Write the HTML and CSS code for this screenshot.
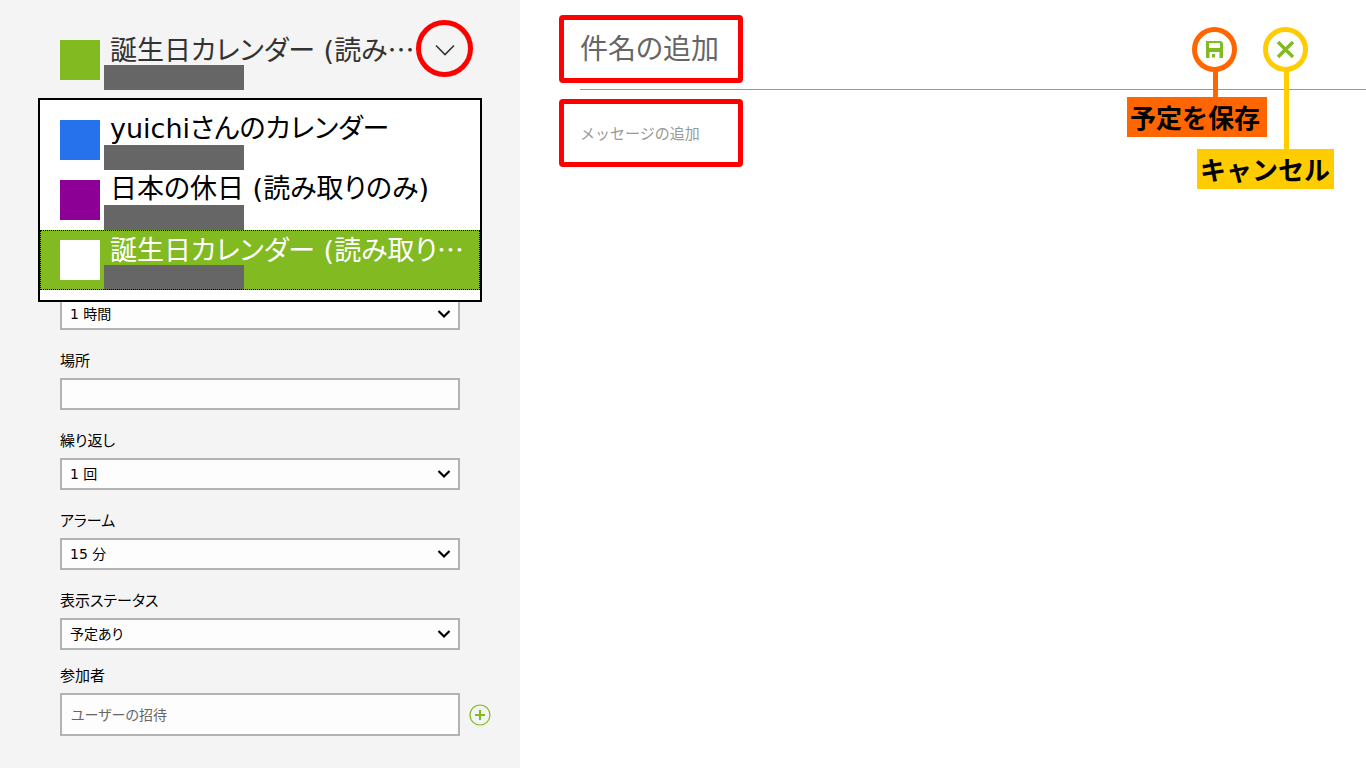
FILE: index.html
```html
<!DOCTYPE html>
<html lang="ja">
<head>
<meta charset="utf-8">
<title>予定の追加</title>
<link rel="stylesheet" href="styles.css">
</head>
<body>
<div class="app">
  <aside class="sidebar">
    <div class="picker">
      <div class="calendar">
        <span class="swatch swatch-green"></span>
        <span class="calendar-text">
          <span class="calendar-name">誕生日カレンダー (読み<span class="dots">…</span></span>
          <span class="redacted"></span>
        </span>
      </div>
      <button class="picker-toggle" type="button" aria-label="カレンダーの選択" aria-expanded="true">
        <svg width="20" height="12" viewBox="0 0 20 12"><path d="M1 1.5 10 10.5 19 1.5" fill="none" stroke="#333" stroke-width="1.6"/></svg>
      </button>
      <div class="menu" role="listbox" aria-label="カレンダー">
        <button class="calendar option" type="button" role="option" aria-selected="false">
          <span class="swatch swatch-blue"></span>
          <span class="calendar-text"><span class="calendar-name">yuichiさんのカレンダー</span><span class="redacted"></span></span>
        </button>
        <button class="calendar option" type="button" role="option" aria-selected="false">
          <span class="swatch swatch-purple"></span>
          <span class="calendar-text"><span class="calendar-name">日本の休日 (読み取りのみ)</span><span class="redacted"></span></span>
        </button>
        <button class="calendar option option-selected" type="button" role="option" aria-selected="true">
          <span class="swatch swatch-white"></span>
          <span class="calendar-text"><span class="calendar-name">誕生日カレンダー (読み取り<span class="dots">…</span></span><span class="redacted"></span></span>
        </button>
      </div>
    </div>

    <form class="fields">
      <div class="field">
        <div class="select">
          <select class="control" aria-label="期間"><option>1 時間</option></select>
          <svg class="arrow" width="14" height="10" viewBox="0 0 14 10"><path d="M1.5 2 7 7.5 12.500 2" fill="none" stroke="#000" stroke-width="2.2"/></svg>
        </div>
      </div>
      <div class="field">
        <label class="label" for="place">場所</label>
        <input class="control" id="place" type="text">
      </div>
      <div class="field">
        <label class="label" for="repeat">繰り返し</label>
        <div class="select">
          <select class="control" id="repeat"><option>1 回</option></select>
          <svg class="arrow" width="14" height="10" viewBox="0 0 14 10"><path d="M1.500 2 7 7.500 12.500 2" fill="none" stroke="#000" stroke-width="2.2"/></svg>
        </div>
      </div>
      <div class="field">
        <label class="label" for="alarm">アラーム</label>
        <div class="select">
          <select class="control" id="alarm"><option>15 分</option></select>
          <svg class="arrow" width="14" height="10" viewBox="0 0 14 10"><path d="M1.500 2 7 7.500 12.500 2" fill="none" stroke="#000" stroke-width="2.2"/></svg>
        </div>
      </div>
      <div class="field">
        <label class="label" for="status">表示ステータス</label>
        <div class="select">
          <select class="control" id="status"><option>予定あり</option></select>
          <svg class="arrow" width="14" height="10" viewBox="0 0 14 10"><path d="M1.500 2 7 7.500 12.500 2" fill="none" stroke="#000" stroke-width="2.2"/></svg>
        </div>
      </div>
      <div class="field field-people">
        <label class="label" for="people">参加者</label>
        <div class="people">
          <input class="control control-tall" id="people" type="text" placeholder="ユーザーの招待">
          <button class="add" type="button" aria-label="追加">
            <svg width="22" height="22" viewBox="0 0 22 22"><circle cx="11" cy="11" r="10" fill="none" stroke="#82ba21" stroke-width="1.200"/><path d="M11 6v10M6 11h10" stroke="#82ba21" stroke-width="2"/></svg>
          </button>
        </div>
      </div>
    </form>
  </aside>

  <main class="main">
    <header class="header">
      <div class="marked">
        <input class="subject" type="text" placeholder="件名の追加" aria-label="件名">
      </div>
      <div class="actions">
        <div class="action action-save">
          <button class="round" type="button" aria-label="保存">
            <svg width="17" height="17" viewBox="0 0 17 17"><path fill="#82ba21" fill-rule="evenodd" d="M0 0H15L17 2V17H13.500V11H3.500V17H0ZM3 2V7H14V2ZM6 13H9V16.500H6Z"/></svg>
          </button>
          <span class="stem"></span>
          <span class="callout">予定を保存</span>
        </div>
        <div class="action action-cancel">
          <button class="round" type="button" aria-label="閉じる">
            <svg width="19" height="19" viewBox="0 0 19 19"><path d="M2 2 17 17M17 2 2 17" stroke="#82ba21" stroke-width="3.400"/></svg>
          </button>
          <span class="stem"></span>
          <span class="callout">キャンセル</span>
        </div>
      </div>
    </header>
    <div class="marked">
      <textarea class="message" placeholder="メッセージの追加" aria-label="メッセージ"></textarea>
    </div>
  </main>
</div>
</body>
</html>
```
FILE: styles.css
```css
* { box-sizing: border-box; }

body {
  margin: 0;
  background: #fff;
  color: #000;
  font-family: "DejaVu Sans", "Noto Sans CJK JP", sans-serif;
  font-size: 15px;
  font-feature-settings: "palt";
}

button, input, select, textarea {
  font: inherit;
  font-feature-settings: inherit;
  color: inherit;
  border: 0;
  margin: 0;
  padding: 0;
  background: none;
  border-radius: 0;
}

svg { display: block; }

.app { display: flex; min-height: 100vh; }

.sidebar {
  flex: 0 0 520px;
  padding: 30px 60px 32px;
  background: #f4f4f4;
}

.picker { position: relative; }

.calendar { display: flex; gap: 4px; height: 60px; }

.calendar-text { display: flex; flex-direction: column; }

.calendar-name {
  height: 35px;
  padding-left: 6px;
  font-size: 27px;
  line-height: 38px;
  white-space: nowrap;
  text-align: left;
}

.picker > .calendar { color: #333; }

.dots { font-family: "Noto Sans CJK JP", sans-serif; }

.redacted { width: 140px; height: 25px; background: #666; }

.swatch { width: 40px; height: 40px; margin-top: 10px; }
.swatch-green { background: #82ba21; }
.swatch-blue { background: #2672ec; }
.swatch-purple { background: #8c0095; }
.swatch-white { background: #fff; }

.picker-toggle {
  position: absolute;
  top: -10px;
  right: -13px;
  display: grid;
  place-items: center;
  width: 57px;
  height: 57px;
  padding-top: 3px;
  border: 5px solid #f00;
  border-radius: 50%;
}

.menu {
  position: absolute;
  z-index: 2;
  top: 68px;
  left: -22px;
  right: -22px;
  padding: 10px 0;
  border: 2px solid #000;
  background: #fff;
}

.option { width: 100%; padding-left: 20px; }

.option-selected {
  background: #82ba21;
  color: #fff;
  outline: 1px dotted #000;
  outline-offset: -1px;
}

.fields {
  display: flex;
  flex-direction: column;
  gap: 20px;
  padding-top: 208px;
}

.field { display: flex; flex-direction: column; gap: 6px; }

.field-people { margin-top: -5px; }

.label { font-size: 15px; line-height: 22px; }

.control {
  width: 100%;
  height: 32px;
  padding: 0 8px;
  border: 2px solid #b3b3b3;
  background: #fdfdfd;
  font-size: 14px;
}

.control-tall { height: 43px; padding: 0 9px; }

.select { display: grid; align-items: center; }
.select > * { grid-area: 1 / 1; }
.select select { appearance: none; }

.arrow { justify-self: end; margin-right: 9px; pointer-events: none; }

.people { display: flex; align-items: center; gap: 9px; margin-right: -31px; }

.add { flex: none; }

::placeholder { color: #666; opacity: 1; }

.main { flex: 1; min-width: 0; padding-left: 39px; }

.header {
  display: flex;
  justify-content: space-between;
  height: 99px;
  padding-top: 15px;
  background: linear-gradient(#82ba21, #82ba21) 21px 89px / 100% 1px no-repeat;
}

.marked {
  width: 184px;
  height: 68px;
  border: 5px solid #f00;
  border-radius: 4px;
}

.subject, .message { width: 100%; height: 100%; padding-left: 16px; }

.subject { font-size: 28px; }

.message {
  display: block;
  padding-top: 18px;
  line-height: 24px;
  font-size: 15px;
  font-feature-settings: normal;
  resize: none;
}

.message::placeholder { color: #999; }

.actions { display: flex; gap: 26px; padding: 12px 58px 0 0; }

.action { position: relative; width: 45px; height: 45px; }
.action-save { --mark: #f60; --reach: 70px; }
.action-cancel { --mark: #fc0; --reach: 122px; }

.round {
  display: grid;
  place-items: center;
  width: 45px;
  height: 45px;
  border: 5px solid var(--mark);
  border-radius: 50%;
}

.stem {
  position: absolute;
  top: 43px;
  left: 21px;
  width: 5px;
  height: calc(var(--reach) - 43px);
  background: var(--mark);
}

.callout {
  position: absolute;
  top: var(--reach);
  right: -30px;
  padding: 0 7px 0 3px;
  background: var(--mark);
  font-family: "Noto Sans CJK JP", sans-serif;
  font-size: 26px;
  font-weight: 700;
  font-feature-settings: normal;
  line-height: 40px;
  white-space: nowrap;
}

.action-cancel .callout { right: -26px; padding-right: 4px; }
```
